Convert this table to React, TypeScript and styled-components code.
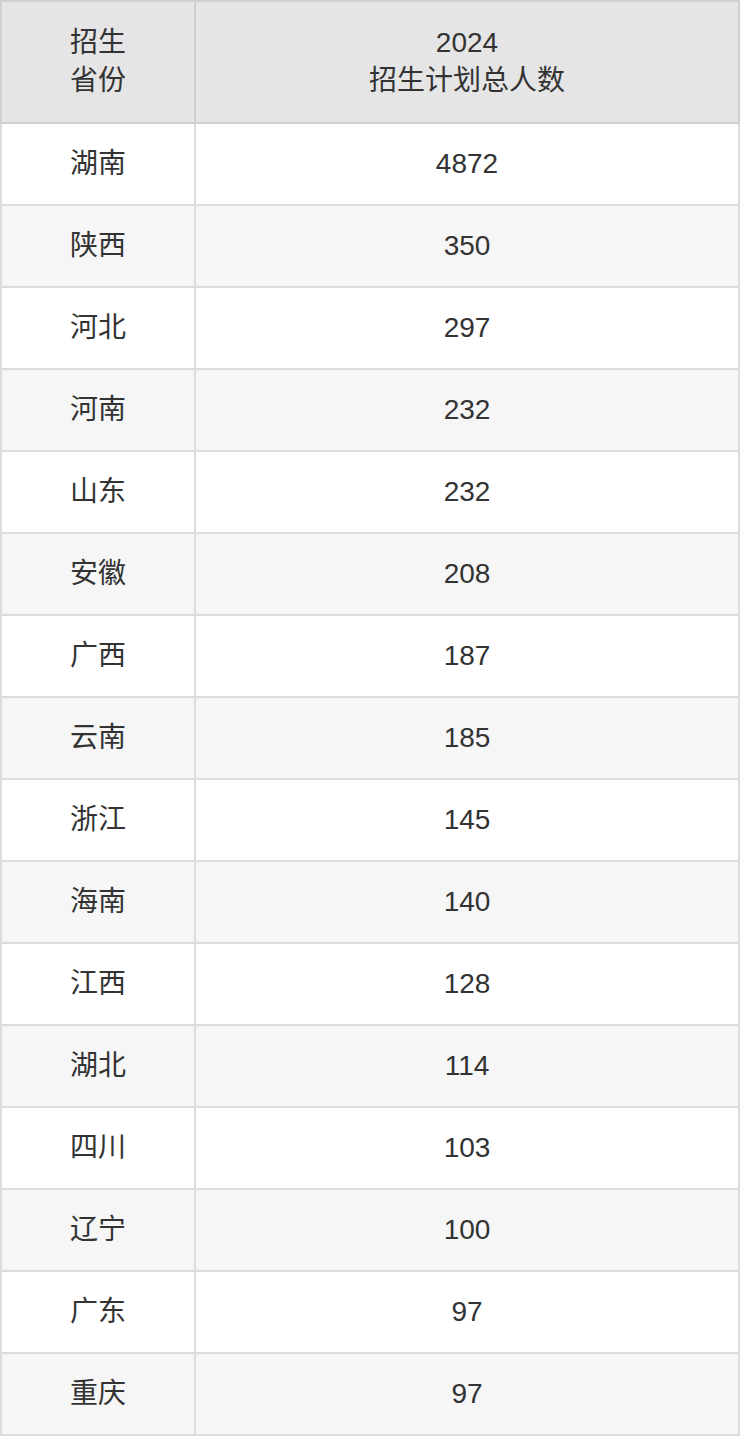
import React from 'react'
import styled, { createGlobalStyle } from 'styled-components'

const GlobalStyle = createGlobalStyle`
  html, body {
    margin: 0;
    padding: 0;
    background: #fff;
  }
  body {
    font-family: "Liberation Sans", Arial, "Noto Sans CJK SC", sans-serif;
    color: #333;
  }
`

const Table = styled.table`
  width: 740px;
  border-collapse: collapse;
  table-layout: fixed;
  font-size: 28px;
  color: #333;
`

const HeadCell = styled.th<{ $width?: number }>`
  width: ${(p) => (p.$width ? `${p.$width}px` : 'auto')};
  height: 120px;
  padding: 0 10px;
  background: #e5e5e5;
  border: 2px solid #d0d0d0;
  font-weight: normal;
  line-height: 38px;
  text-align: center;
  vertical-align: middle;
`

const Row = styled.tr<{ $striped: boolean }>`
  background: ${(p) => (p.$striped ? '#f6f6f6' : '#fff')};
`

const Cell = styled.td`
  height: 80px;
  padding: 0 10px;
  border: 2px solid #dcdcdc;
  text-align: center;
  vertical-align: middle;
  line-height: 1;
`

const rows: [string, number][] = [
  ['湖南', 4872],
  ['陕西', 350],
  ['河北', 297],
  ['河南', 232],
  ['山东', 232],
  ['安徽', 208],
  ['广西', 187],
  ['云南', 185],
  ['浙江', 145],
  ['海南', 140],
  ['江西', 128],
  ['湖北', 114],
  ['四川', 103],
  ['辽宁', 100],
  ['广东', 97],
  ['重庆', 97],
]

export default function App() {
  return (
    <>
      <GlobalStyle />
      <Table>
        <thead>
          <tr>
            <HeadCell $width={172}>
              招生
              <br />
              省份
            </HeadCell>
            <HeadCell>
              2024
              <br />
              招生计划总人数
            </HeadCell>
          </tr>
        </thead>
        <tbody>
          {rows.map(([province, total], i) => (
            <Row key={province + i} $striped={i % 2 === 1}>
              <Cell>{province}</Cell>
              <Cell>{total}</Cell>
            </Row>
          ))}
        </tbody>
      </Table>
    </>
  )
}
